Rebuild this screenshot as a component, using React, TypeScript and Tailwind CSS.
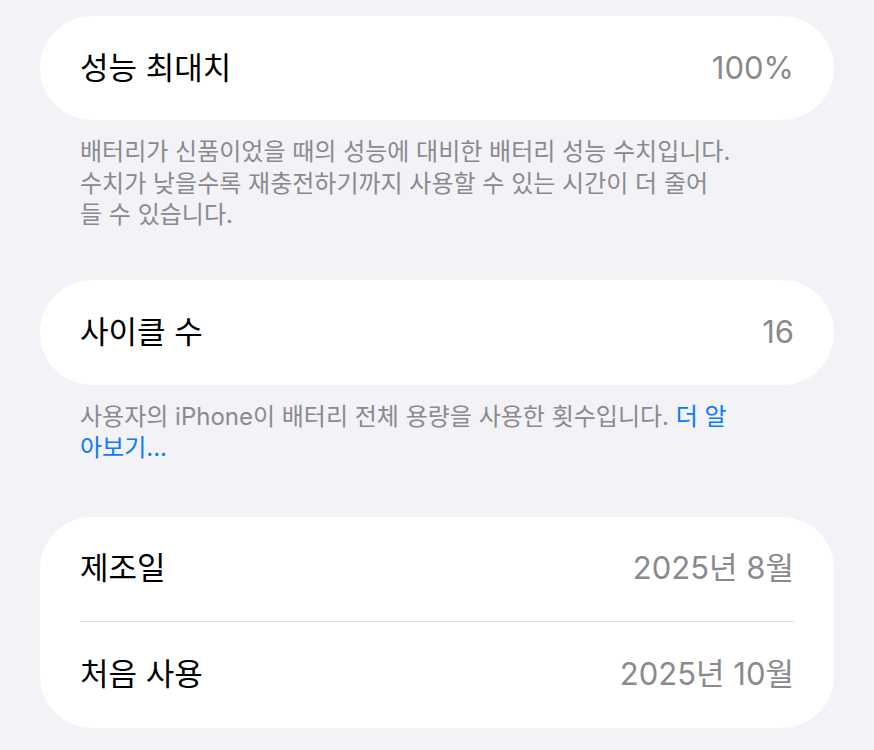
export default function App() {
  const font = "font-['Inter','Noto_Sans_CJK_KR',sans-serif]";
  return (
    <div className={`min-h-[750px] w-[874px] bg-[#f2f2f7] px-[40px] pt-[16px] ${font}`}>
      <div className="flex h-[104px] items-center justify-between rounded-[52px] bg-white px-[40px]">
        <span className="text-[31px] text-black">성능 최대치</span>
        <span className="text-[31px] text-[#8a8a8e]">100%</span>
      </div>
      <p className="mt-[16px] px-[40px] text-[24px] leading-[31.5px] text-[#8a8a8e] whitespace-nowrap">
        배터리가 신품이었을 때의 성능에 대비한 배터리 성능 수치입니다.
        <br />
        수치가 낮을수록 재충전하기까지 사용할 수 있는 시간이 더 줄어
        <br />
        들 수 있습니다.
      </p>

      <div className="mt-[49px] flex h-[105px] items-center justify-between rounded-[52px] bg-white px-[40px]">
        <span className="text-[31px] text-black">사이클 수</span>
        <span className="text-[31px] text-[#8a8a8e]">16</span>
      </div>
      <p className="mt-[16px] px-[40px] text-[24px] leading-[31.5px] text-[#8a8a8e] whitespace-nowrap">
        사용자의 iPhone이 배터리 전체 용량을 사용한 횟수입니다.{" "}
        <span className="text-[#0a7aff]">더 알</span>
        <br />
        <span className="text-[#0a7aff]">아보기...</span>
      </p>

      <div className="mt-[53px] rounded-[52px] bg-white px-[40px]">
        <div className="flex h-[104px] items-center justify-between">
          <span className="text-[31px] text-black">제조일</span>
          <span className="text-[31px] text-[#8a8a8e]">2025년 8월</span>
        </div>
        <div className="h-px bg-[#e0e0e4]" />
        <div className="flex h-[106px] items-center justify-between">
          <span className="text-[31px] text-black">처음 사용</span>
          <span className="text-[31px] text-[#8a8a8e]">2025년 10월</span>
        </div>
      </div>
    </div>
  );
}
